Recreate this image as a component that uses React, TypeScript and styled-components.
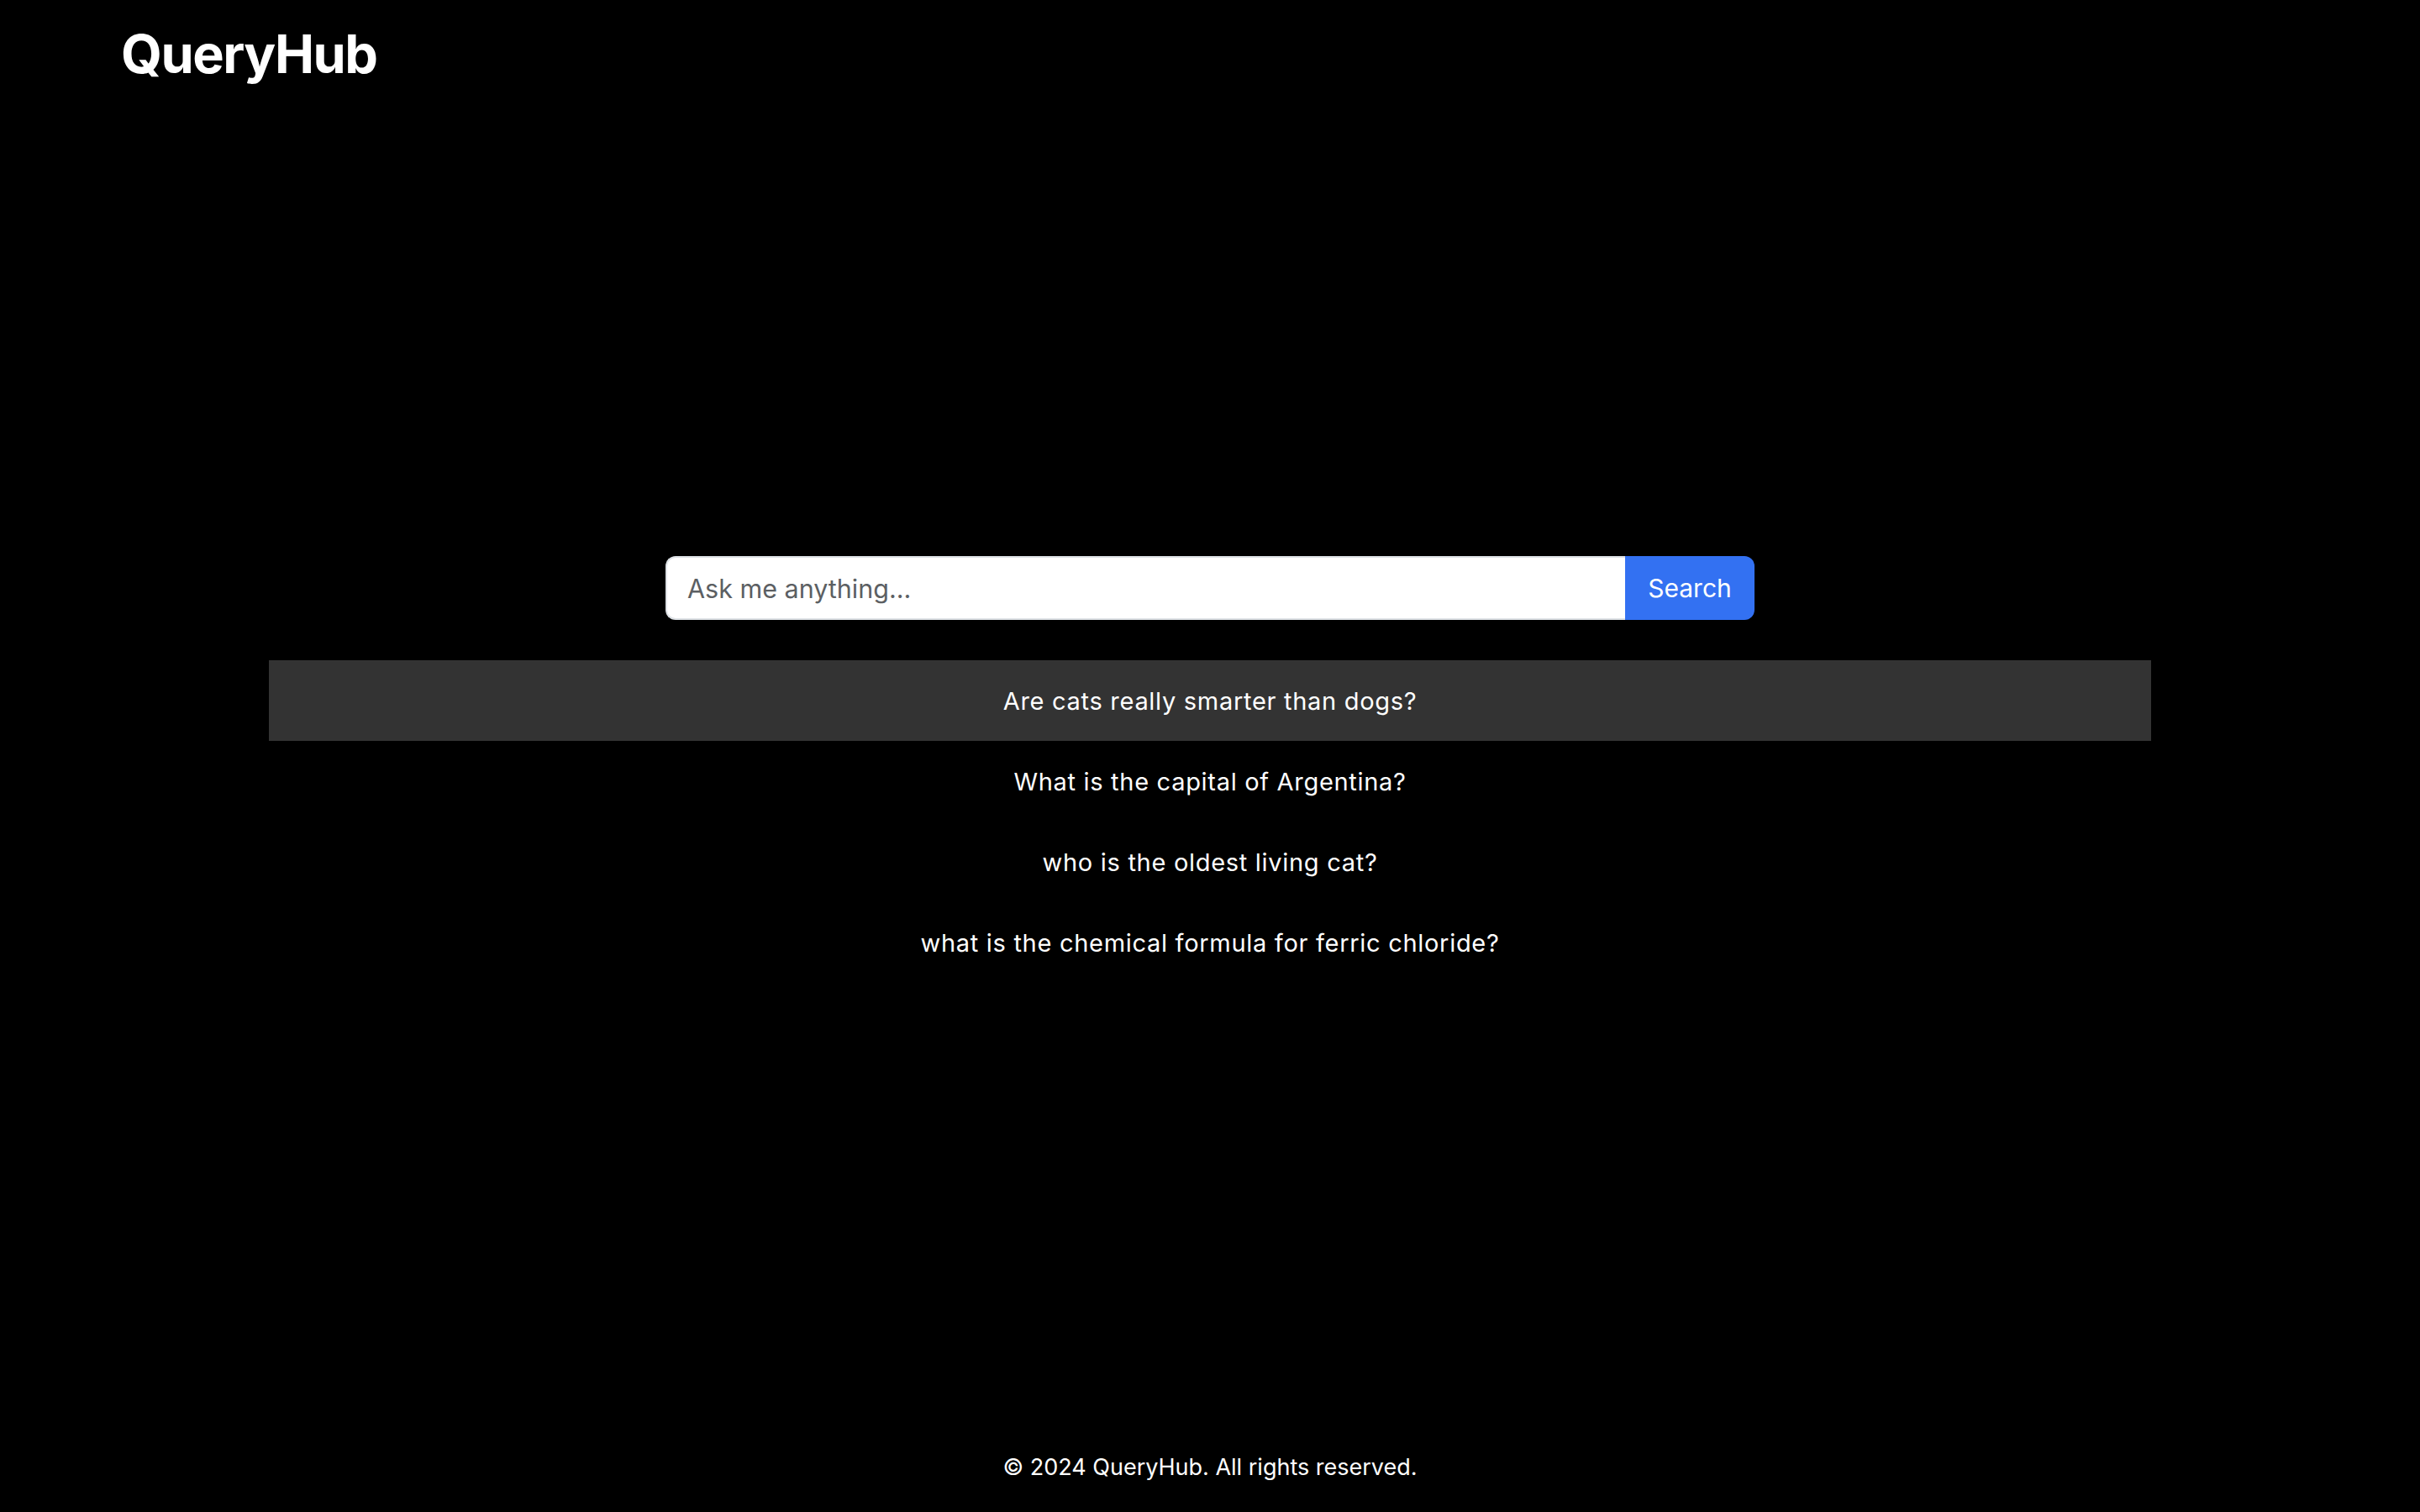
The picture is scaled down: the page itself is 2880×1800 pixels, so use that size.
import React from "react";
import styled, { createGlobalStyle } from "styled-components";

const GlobalStyle = createGlobalStyle`
  html, body {
    margin: 0;
    padding: 0;
    background: #000000;
    color: #ffffff;
    font-family: Inter, "Noto Sans", "DejaVu Sans", sans-serif;
  }
  * { box-sizing: border-box; }
`;

const Page = styled.div`
  min-height: 100vh;
  display: flex;
  flex-direction: column;
  background: #000;
`;

const Header = styled.header`
  padding: 27px 144px 0;
  height: 101px;
`;

const Logo = styled.h1`
  margin: 0;
  font-size: 63px;
  line-height: 74px;
  font-weight: 700;
  letter-spacing: -1.5px;
  color: #fff;
`;

const Main = styled.main`
  flex: 1;
  display: flex;
  flex-direction: column;
  align-items: center;
  padding-top: 561px;
`;

const SearchGroup = styled.form`
  display: flex;
  width: 1296px;
  height: 76px;
`;

const SearchInput = styled.input`
  flex: 1;
  min-width: 0;
  height: 100%;
  padding: 12px 24px;
  font-family: inherit;
  font-size: 30.5px;
  color: #212529;
  background: #fff;
  border: 2px solid #dee2e6;
  border-right: none;
  border-radius: 12px 0 0 12px;
  outline: none;
  &::placeholder {
    color: #5c5f63;
  }
`;

const SearchButton = styled.button`
  width: 154px;
  height: 100%;
  padding: 0 24px;
  font-family: inherit;
  font-size: 30px;
  color: #fff;
  background: #3371f2;
  border: none;
  border-radius: 0 12px 12px 0;
  cursor: pointer;
`;

const SuggestionList = styled.ul`
  list-style: none;
  margin: 48px 0 0;
  padding: 0;
  width: 2240px;
`;

const Suggestion = styled.li<{ $active?: boolean }>`
  height: 96px;
  display: flex;
  align-items: center;
  justify-content: center;
  font-size: 29px;
  letter-spacing: 0.7px;
  color: #fff;
  background: ${(p) => (p.$active ? "#333333" : "transparent")};
  cursor: pointer;
`;

const Footer = styled.footer`
  text-align: center;
  font-size: 27px;
  line-height: 42px;
  padding-bottom: 32px;
  color: #fff;
`;

const suggestions = [
  "Are cats really smarter than dogs?",
  "What is the capital of Argentina?",
  "who is the oldest living cat?",
  "what is the chemical formula for ferric chloride?",
];

export default function App() {
  return (
    <Page>
      <GlobalStyle />
      <Header>
        <Logo>QueryHub</Logo>
      </Header>
      <Main>
        <SearchGroup onSubmit={(e) => e.preventDefault()}>
          <SearchInput placeholder="Ask me anything..." />
          <SearchButton type="submit">Search</SearchButton>
        </SearchGroup>
        <SuggestionList>
          {suggestions.map((s, i) => (
            <Suggestion key={s} $active={i === 0}>
              {s}
            </Suggestion>
          ))}
        </SuggestionList>
      </Main>
      <Footer>© 2024 QueryHub. All rights reserved.</Footer>
    </Page>
  );
}
